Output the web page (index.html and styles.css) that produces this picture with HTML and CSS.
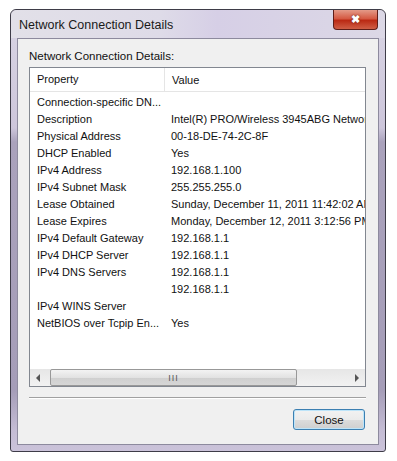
FILE: index.html
```html
<!DOCTYPE html>
<html lang="en">
<head>
    <meta charset="UTF-8">
    <title>Network Connection Details</title>
    <link rel="stylesheet" href="styles.css">
</head>
<body>

    <div class="window">
        <div class="titlebar">
            <span class="title">Network Connection Details</span>
            <div class="close-x">&#x2716;</div>
        </div>

        <div class="client">
            <div class="label">Network Connection Details:</div>

            <div class="listview">
                <div class="header">
                    <div class="col-prop">Property</div>
                    <div class="col-val">Value</div>
                </div>

                <div class="rows">
                    <div class="row"><div class="col-prop">Connection-specific DN...</div><div class="col-val"></div></div>
                    <div class="row"><div class="col-prop">Description</div><div class="col-val">Intel(R) PRO/Wireless 3945ABG Network Connection</div></div>
                    <div class="row"><div class="col-prop">Physical Address</div><div class="col-val">00-18-DE-74-2C-8F</div></div>
                    <div class="row"><div class="col-prop">DHCP Enabled</div><div class="col-val">Yes</div></div>
                    <div class="row"><div class="col-prop">IPv4 Address</div><div class="col-val">192.168.1.100</div></div>
                    <div class="row"><div class="col-prop">IPv4 Subnet Mask</div><div class="col-val">255.255.255.0</div></div>
                    <div class="row"><div class="col-prop">Lease Obtained</div><div class="col-val">Sunday, December 11, 2011 11:42:02 AM</div></div>
                    <div class="row"><div class="col-prop">Lease Expires</div><div class="col-val">Monday, December 12, 2011 3:12:56 PM</div></div>
                    <div class="row"><div class="col-prop">IPv4 Default Gateway</div><div class="col-val">192.168.1.1</div></div>
                    <div class="row"><div class="col-prop">IPv4 DHCP Server</div><div class="col-val">192.168.1.1</div></div>
                    <div class="row"><div class="col-prop">IPv4 DNS Servers</div><div class="col-val">192.168.1.1</div></div>
                    <div class="row"><div class="col-prop"></div><div class="col-val">192.168.1.1</div></div>
                    <div class="row"><div class="col-prop">IPv4 WINS Server</div><div class="col-val"></div></div>
                    <div class="row"><div class="col-prop">NetBIOS over Tcpip En...</div><div class="col-val">Yes</div></div>
                </div>

                <!-- horizontal scrollbar -->
                <div class="hscroll">
                    <div class="arrow arrow-left"></div>
                    <div class="track">
                        <div class="thumb"><span class="grip">III</span></div>
                    </div>
                    <div class="arrow arrow-right"></div>
                </div>
            </div>

            <div class="separator"></div>

            <div class="buttons">
                <button class="close-btn">Close</button>
            </div>
        </div>
    </div>

</body>
</html>
```

FILE: styles.css
```css
body {
    margin: 0;
    background: white;
    font-family: "Liberation Sans", Arial, sans-serif;
    font-size: 11px;
    color: #111;
}

/* Window frame */
.window {
    margin: 9px 0 0 10px;
    width: 376px;
    height: 443px;
    border: 1px solid #3e3c48;
    border-radius: 6px 6px 3px 3px;
    background: linear-gradient(to bottom, #d9d5e4 0px, #cdc6db 118px, #aaa2bc 132px, #a59db8 380px, #c4bcd4 420px, #cbc3da 100%);
    padding: 0 6px 6px 6px;
    box-sizing: border-box;
    display: flex;
    flex-direction: column;
}

.titlebar {
    height: 28px;
    display: flex;
    align-items: flex-start;
    justify-content: space-between;
    background: linear-gradient(to right, #e2e0e8 0%, #dedbe8 40%, #d6cfe6 55%, #dcd8e6 100%);
    margin: 0 -6px;
    padding: 0 7px 0 8px;
    border-radius: 6px 6px 0 0;
}

.title {
    margin-top: 8px;
    font-size: 12.5px;
    color: #1a1a1a;
}

.close-x {
    width: 43px;
    height: 19px;
    border: 1px solid #5e1e18;
    border-top: none;
    border-radius: 0 0 4px 4px;
    background: linear-gradient(to bottom, #e49a88 0%, #d55a43 45%, #bb2a14 55%, #cf5e45 100%);
    color: white;
    font-size: 11px;
    font-weight: bold;
    text-align: center;
    line-height: 18px;
    text-shadow: 0 0 2px #5e1e18;
}

/* Dialog client area */
.client {
    flex: 1;
    background: #f0f0f0;
    border: 1px solid #8d8a9e;
    padding: 11px 12px 0 11px;
    display: flex;
    flex-direction: column;
}

.label {
    height: 17px;
    font-size: 11.5px;
}

.listview {
    height: 318px;
    border: 1px solid #828790;
    background: white;
    display: flex;
    flex-direction: column;
    overflow: hidden;
}

.header {
    display: flex;
    height: 23px;
    border-bottom: 1px solid #e5e5e5;
    align-items: center;
}

.header .col-prop {
    border-right: 1px solid #e5e5e5;
    height: 23px;
    line-height: 23px;
}

.col-prop {
    width: 127px;
    flex-shrink: 0;
    padding-left: 7px;
    white-space: nowrap;
    overflow: hidden;
}

.col-val {
    padding-left: 7px;
    white-space: nowrap;
}

.rows {
    flex: 1;
    padding-top: 2px;
}

.row {
    display: flex;
    height: 17px;
    line-height: 17px;
}

/* Scrollbar */
.hscroll {
    display: flex;
    height: 17px;
    background: linear-gradient(to bottom, #e6e6e6, #f2f2f2);
}

.arrow {
    width: 17px;
    position: relative;
}

.arrow-left::after,
.arrow-right::after {
    content: "";
    position: absolute;
    top: 5px;
    border-top: 4px solid transparent;
    border-bottom: 4px solid transparent;
}

.arrow-left::after {
    left: 6px;
    border-right: 4px solid #555;
}

.arrow-right::after {
    left: 7px;
    border-left: 4px solid #555;
}

.track {
    flex: 1;
    display: flex;
}

.thumb {
    width: 247px;
    margin-left: 3px;
    border: 1px solid #989898;
    border-radius: 2px;
    background: linear-gradient(to bottom, #f3f3f3 0%, #e2e2e2 50%, #cfcfcf 51%, #d6d6d6 100%);
    box-sizing: border-box;
    display: flex;
    justify-content: center;
    align-items: center;
}

.grip {
    font-size: 9px;
    letter-spacing: 1px;
    color: #555;
}

.separator {
    margin-top: 10px;
    height: 1px;
    background: #a0a0a0;
    border-bottom: 1px solid white;
}

.buttons {
    display: flex;
    justify-content: flex-end;
    margin-top: 10px;
}

.close-btn {
    width: 72px;
    height: 21px;
    font-family: "Liberation Sans", Arial, sans-serif;
    font-size: 11.5px;
    color: #111;
    border: 1px solid #3c7fb1;
    border-radius: 3px;
    background: linear-gradient(to bottom, #f2f2f2 0%, #ebebeb 50%, #dddddd 51%, #cfcfcf 100%);
    box-shadow: 0 0 0 1px #bde4f9 inset;
    margin-right: 1px;
}
```
